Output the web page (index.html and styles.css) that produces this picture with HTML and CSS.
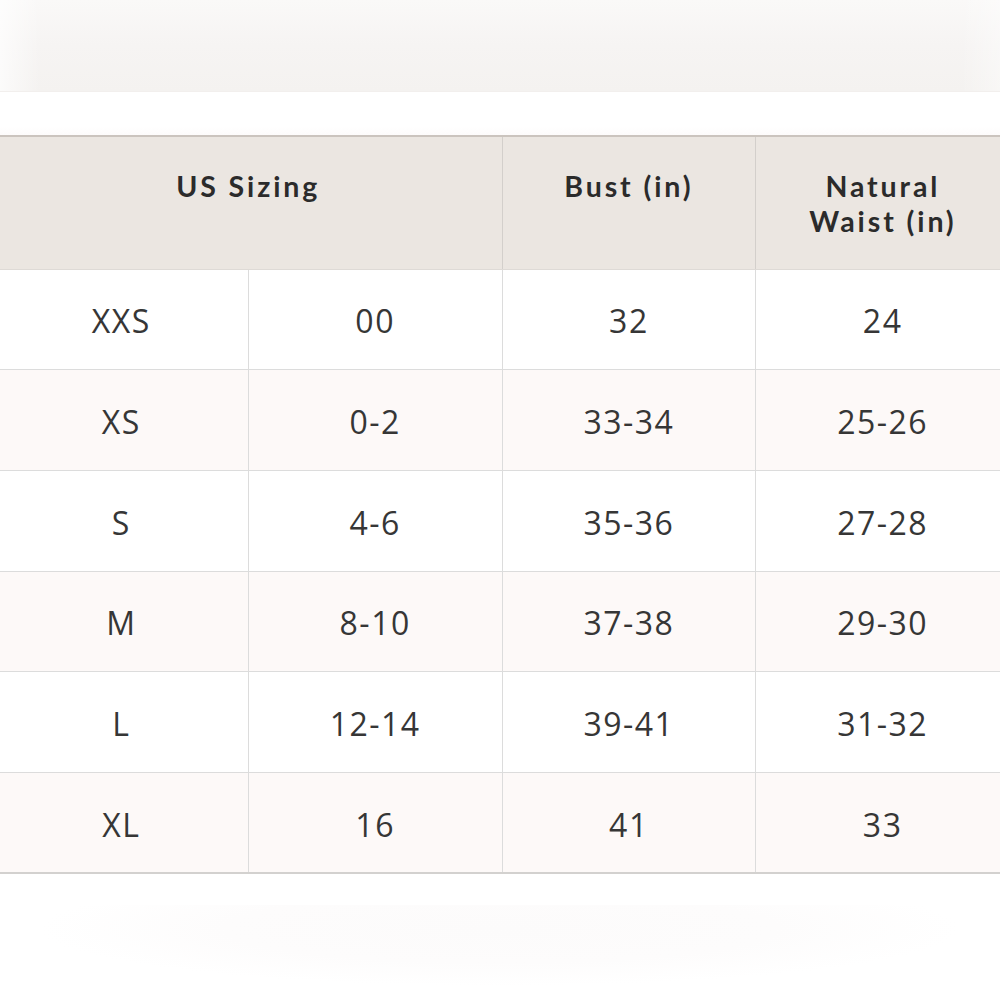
FILE: index.html
```html
<!DOCTYPE html>
<html lang="en">
<head>
<meta charset="utf-8">
<title>Size Chart</title>
<link rel="stylesheet" href="styles.css">
</head>
<body>
<div class="page">
  <div class="top-band"></div>
  <div class="spacer"></div>
  <table class="size-table">
    <thead>
      <tr>
        <th colspan="2">US Sizing</th>
        <th>Bust (in)</th>
        <th>Natural<br>Waist (in)</th>
      </tr>
    </thead>
    <tbody>
      <tr><td>XXS</td><td>00</td><td>32</td><td>24</td></tr>
      <tr><td>XS</td><td>0-2</td><td>33-34</td><td>25-26</td></tr>
      <tr><td>S</td><td>4-6</td><td>35-36</td><td>27-28</td></tr>
      <tr><td>M</td><td>8-10</td><td>37-38</td><td>29-30</td></tr>
      <tr><td>L</td><td>12-14</td><td>39-41</td><td>31-32</td></tr>
      <tr><td>XL</td><td>16</td><td>41</td><td>33</td></tr>
    </tbody>
  </table>
  <div class="bottom-band"></div>
</div>
</body>
</html>
```
FILE: styles.css
```css
html, body {
  margin: 0;
  padding: 0;
  background: #ffffff;
  overflow: hidden;
}
.page {
  width: 1000px;
  height: 1000px;
  overflow: hidden;
  position: relative;
}
.top-band {
  height: 91px;
  background:
    linear-gradient(90deg, rgba(255,255,255,0.7) 0%, rgba(255,255,255,0) 4%, rgba(255,255,255,0) 96%, rgba(255,255,255,0.4) 100%),
    linear-gradient(180deg, #faf9f8 0%, #f6f4f3 50%, #f4f2f0 100%);
  border-bottom: 1px solid #f2efed;
}
.spacer {
  height: 43px;
  background: linear-gradient(180deg, #ffffff 0%, #ffffff 80%, #fdfbfb 100%);
}
.size-table {
  width: 1016px;
  margin-left: -6px;
  border-collapse: collapse;
  table-layout: fixed;
  border-top: 2px solid #cbc4be;
  border-bottom: 2px solid #d3d1cf;
}
.size-table th {
  background: #ebe6e1;
  color: #2b2b2b;
  font-family: "Lato", "Open Sans", sans-serif;
  font-weight: 700;
  font-size: 28.5px;
  letter-spacing: 2.9px;
  line-height: 35px;
  height: 133px;
  padding: 32px 0 0;
  box-sizing: border-box;
  vertical-align: top;
  text-align: center;
  border-left: 1px solid #d3cfcb;
  border-bottom: 1px solid #dedad6;
}
.size-table td {
  color: #363636;
  font-family: "Open Sans", "Noto Sans", sans-serif;
  font-size: 32px;
  letter-spacing: 1.5px;
  height: 100.7px;
  padding: 3px 0 0;
  box-sizing: border-box;
  text-align: center;
  vertical-align: middle;
  border: 1px solid #dcdcdc;
  border-top: 0;
}
.size-table tbody tr:nth-child(even) td {
  background: #fdf9f8;
}
.size-table tbody tr:last-child td {
  border-bottom: 0;
}
.bottom-band {
  position: absolute;
  left: 0;
  right: 0;
  top: 905px;
  height: 95px;
  background: radial-gradient(ellipse 46% 60% at 50% 25%, #fcfbfb 0%, #fdfcfc 60%, #ffffff 100%);
}
```
